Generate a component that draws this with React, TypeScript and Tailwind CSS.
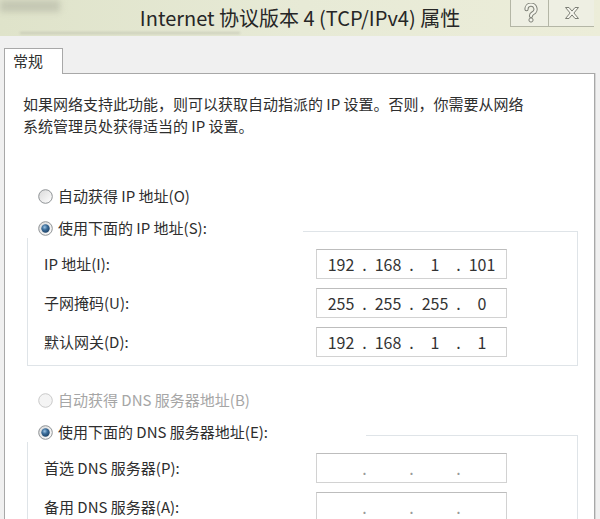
import React from 'react';

const FONT = "font-['Noto_Sans_CJK_SC','Noto_Sans',sans-serif]";

function Radio({ checked = false, disabled = false }: { checked?: boolean; disabled?: boolean }) {
  return (
    <svg width="15" height="15" viewBox="0 0 15 15" className="shrink-0">
      <defs>
        <linearGradient id="rbg" x1="0" y1="0" x2="1" y2="1">
          <stop offset="0" stopColor="#d9d9d9" />
          <stop offset="1" stopColor="#ffffff" />
        </linearGradient>
        <radialGradient id="rdot" cx="0.4" cy="0.35" r="0.7">
          <stop offset="0" stopColor="#9cc3e4" />
          <stop offset="0.45" stopColor="#3a6c99" />
          <stop offset="1" stopColor="#1b3f63" />
        </radialGradient>
      </defs>
      <circle
        cx="7.5"
        cy="7.5"
        r="6.8"
        fill={disabled ? '#f4f4f4' : 'url(#rbg)'}
        stroke={disabled ? '#c9c9c9' : '#8f9396'}
        strokeWidth="1"
      />
      {checked && <circle cx="7.5" cy="7.5" r="4.2" fill="url(#rdot)" />}
    </svg>
  );
}

function HelpIcon() {
  const q = 'M4.5 6.2a4.5 4.5 0 1 1 6.4 4c-1.3.7-1.9 1.3-1.9 2.8';
  return (
    <svg width="16" height="20" viewBox="0 0 16 20">
      <path d={q} fill="none" stroke="#7d7f76" strokeWidth="4.2" strokeLinecap="round" />
      <path d={q} fill="none" stroke="#f4f5ec" strokeWidth="2.2" strokeLinecap="round" />
      <circle cx="9" cy="17" r="2.1" fill="#f4f5ec" stroke="#7d7f76" strokeWidth="1" />
    </svg>
  );
}

function IpField({ parts }: { parts?: string[] }) {
  const segs = parts ?? ['', '', '', ''];
  const empty = !parts;
  return (
    <div className="flex h-[30px] w-[191px] items-center border border-[#d2d2d2] border-t-[#bdbdbd] bg-white pl-[4px] text-[16px] text-[#333]">
      {segs.map((s, i) => (
        <React.Fragment key={i}>
          <span className="w-[40px] text-center">{s}</span>
          {i < 3 && (
            <span className={`w-[7px] text-center ${empty ? 'text-[#999]' : ''}`}>.</span>
          )}
        </React.Fragment>
      ))}
    </div>
  );
}

function Group({
  caption,
  coverWidth,
  rows,
}: {
  caption: string;
  coverWidth: string;
  rows: { label: string; parts?: string[] }[];
}) {
  return (
    <div className="ml-[22px] w-[551px]">
      {/* caption sits on the frame's top edge */}
      <div className={`relative z-10 flex h-[20px] items-center gap-[5px] bg-white pl-[11px] ${coverWidth}`}>
        <Radio checked />
        <span>{caption}</span>
      </div>
      <div className="-mt-[7px] flex flex-col gap-[9px] border border-[#dfe4e8] pt-[17px] pb-[8px]">
        {rows.map((r) => (
          <div key={r.label} className="grid grid-cols-[288px_191px] items-center">
            <span className="pl-[16px]">{r.label}</span>
            <IpField parts={r.parts} />
          </div>
        ))}
      </div>
    </div>
  );
}

export default function App() {
  return (
    <div className={`relative h-[519px] w-[600px] overflow-hidden bg-[#f0f0f0] ${FONT} text-[15px] text-[#2e2e2e]`}>
      {/* Title bar */}
      <div className="relative flex h-[36px] items-center justify-center bg-gradient-to-r from-[#dfe3ca] via-[#e7ead6] to-[#ecedd9]">
        <div className="absolute left-0 top-0 h-[12px] w-[60px] bg-[#a9ab9c]/50 blur-[3px]" />
        <div className="absolute left-[20px] top-[32px] h-[2px] w-[220px] bg-[#b8baa9]/60 blur-[1px]" />
        <span className="text-[20px] text-[#262626]">Internet 协议版本 4 (TCP/IPv4) 属性</span>
        <div className="absolute right-[6px] top-0 flex h-[27px]">
          <div className="flex w-[38px] items-center justify-center border-b border-l border-[#b4b6a6] bg-[#eeefe3]">
            <HelpIcon />
          </div>
          <div className="flex w-[46px] items-center justify-center border-b border-l border-[#b4b6a6] bg-[#eeefe3]">
            <svg width="16" height="14" viewBox="0 0 16 14">
              <path
                d="M1.5 1.5h3.5l3 3.6 3-3.6h3.5l-4.6 5.5 4.6 5.5h-3.5l-3-3.6-3 3.6h-3.5l4.6-5.5z"
                fill="#f6f6ee"
                stroke="#7d7f76"
                strokeWidth="1"
                strokeLinejoin="round"
              />
            </svg>
          </div>
        </div>
      </div>

      {/* Tab strip */}
      <div className="pl-[4px] pt-[12px]">
        <div className="relative z-10 -mb-px flex h-[26px] w-[59px] items-center border border-b-0 border-[#a8a8a8] bg-white pl-[8px] text-[15px]">
          常规
        </div>
      </div>

      {/* Panel */}
      <div className="ml-[4px] h-[460px] w-[591px] border border-[#a8a8a8] bg-white shadow-[1px_0_0_#d6d6d6]">
        <p className="pl-[18px] pt-[19px] leading-[22px]">
          如果网络支持此功能，则可以获取自动指派的 IP 设置。否则，你需要从网络
          <br />
          系统管理员处获得适当的 IP 设置。
        </p>

        <div className="mt-[49px] flex h-[20px] items-center gap-[5px] pl-[33px]">
          <Radio />
          <span>自动获得 IP 地址(O)</span>
        </div>

        <div className="mt-[12px]">
          <Group
            caption="使用下面的 IP 地址(S):"
            coverWidth="w-[276px]"
            rows={[
              { label: 'IP 地址(I):', parts: ['192', '168', '1', '101'] },
              { label: '子网掩码(U):', parts: ['255', '255', '255', '0'] },
              { label: '默认网关(D):', parts: ['192', '168', '1', '1'] },
            ]}
          />
        </div>

        <div className="mt-[24px] flex h-[20px] items-center gap-[5px] pl-[33px] text-[#a6a6a6]">
          <Radio disabled />
          <span>自动获得 DNS 服务器地址(B)</span>
        </div>

        <div className="mt-[12px]">
          <Group
            caption="使用下面的 DNS 服务器地址(E):"
            coverWidth="w-[339px]"
            rows={[{ label: '首选 DNS 服务器(P):' }, { label: '备用 DNS 服务器(A):' }]}
          />
        </div>
      </div>
    </div>
  );
}
